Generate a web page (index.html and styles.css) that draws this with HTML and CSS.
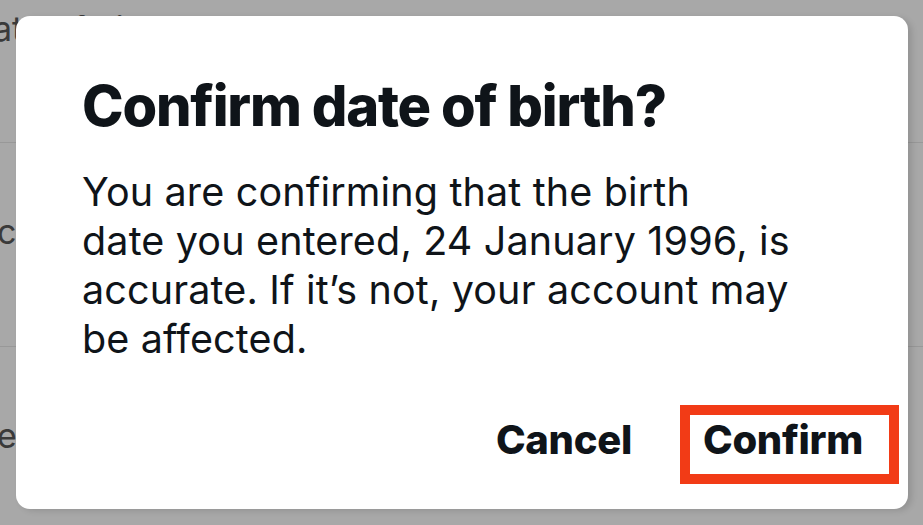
FILE: index.html
```html
<!DOCTYPE html>
<html lang="en">
<head>
<meta charset="utf-8">
<title>Confirm date of birth?</title>
<link rel="stylesheet" href="styles.css">
</head>
<body>
<div class="page">
  <div class="row row-top">
    <span class="bg-text">ate of birth</span>
  </div>
  <div class="row row-mid">
    <span class="bg-text">cou</span>
  </div>
  <div class="row row-bottom">
    <span class="bg-text">ed</span>
  </div>
</div>

<div class="dialog" role="dialog" aria-labelledby="dlg-title">
  <h1 class="dialog-title" id="dlg-title">Confirm date of birth?</h1>
  <p class="dialog-body">You are confirming that the birth<br>date you entered, 24 January 1996, is<br>accurate. If it’s not, your account may<br>be affected.</p>
  <div class="dialog-actions">
    <button class="action">Cancel</button>
    <button class="action action-confirm">Confirm</button>
  </div>
</div>
</body>
</html>
```

FILE: styles.css
```css
html, body {
  margin: 0;
  padding: 0;
}

body {
  width: 923px;
  height: 525px;
  overflow: hidden;
  background: #a8a8a8;
  font-family: "Inter", "Noto Sans", sans-serif;
  color: #0f1419;
  position: relative;
}

.page {
  display: flex;
  flex-direction: column;
}

.row {
  border-bottom: 1px solid #989898;
  display: flex;
  align-items: flex-start;
  overflow: hidden;
}

.row-top {
  height: 142px;
}

.row-mid {
  height: 203px;
}

.row-bottom {
  height: 180px;
  border-bottom: none;
}

.bg-text {
  font-size: 34px;
  color: #3a3a3a;
  white-space: nowrap;
}

.row-top .bg-text {
  margin-top: 8px;
  margin-left: -7px;
}

.row-mid .bg-text {
  margin-top: 68px;
  margin-left: -3px;
}

.row-bottom .bg-text {
  margin-top: 68px;
  margin-left: -3px;
}

.dialog {
  position: absolute;
  left: 16px;
  top: 16px;
  width: 892px;
  height: 493px;
  box-sizing: border-box;
  background: #ffffff;
  border-radius: 14px;
  box-shadow: 4px 2px 6px rgba(0, 0, 0, 0.12);
  padding: 56px 9px 0 66px;
  display: flex;
  flex-direction: column;
}

.dialog-title {
  margin: 0;
  font-size: 56px;
  font-weight: 800;
  line-height: 68px;
  letter-spacing: -1.2px;
}

.dialog-body {
  margin: 28px 0 0 0;
  font-size: 39.5px;
  font-weight: 400;
  line-height: 49px;
  letter-spacing: 0.15px;
}

.dialog-actions {
  margin-top: auto;
  margin-bottom: 25px;
  display: flex;
  justify-content: flex-end;
  align-items: center;
  gap: 48px;
}

.action {
  font-family: inherit;
  background: none;
  border: none;
  padding: 0 0 10px 0;
  color: #0f1419;
  font-size: 40px;
  font-weight: 800;
  line-height: 49px;
  letter-spacing: -0.3px;
  cursor: pointer;
}

.action-confirm {
  border: 10px solid #f23b16;
  padding: 0 26px 10px 13px;
}
```
